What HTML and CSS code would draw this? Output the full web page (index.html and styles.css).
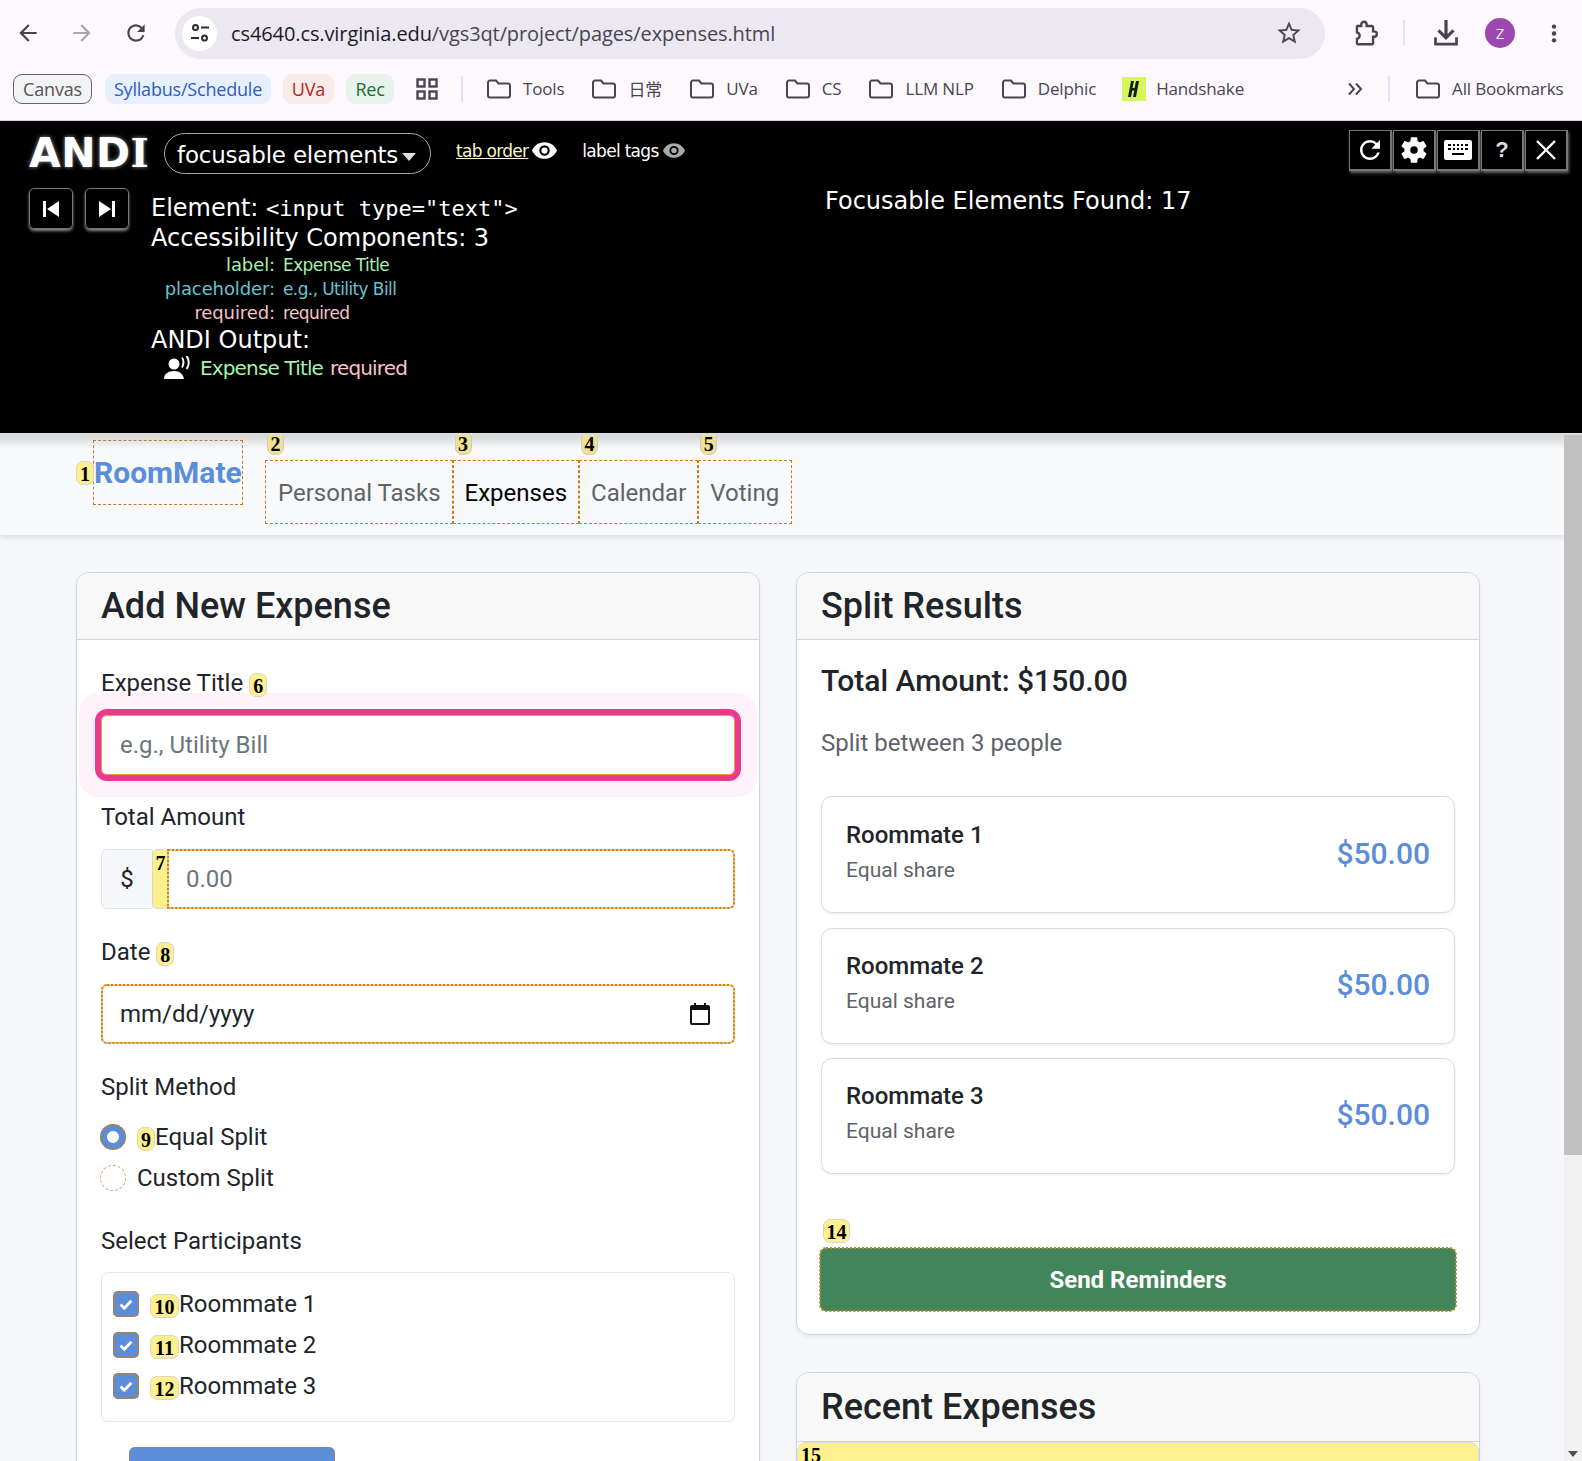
FILE: index.html
```html
<!DOCTYPE html>
<html lang="en">
<head>
<meta charset="UTF-8">
<title>RoomMate - Expenses</title>
<link rel="stylesheet" href="styles.css">
</head>
<body>

<svg class="defs" width="0" height="0" aria-hidden="true">
  <symbol id="folder" viewBox="0 0 26 24">
    <path d="M2 5.500a2 2 0 0 1 2-2h6l2.500 3H22a2 2 0 0 1 2 2v10a2 2 0 0 1-2 2H4a2 2 0 0 1-2-2z" fill="none" stroke="#47464f" stroke-width="2"/>
  </symbol>
  <symbol id="eye" viewBox="0 0 24 16">
    <path d="M12 0C6.500 0 2 3.400 0 8c2 4.600 6.500 8 12 8s10-3.400 12-8c-2-4.600-6.500-8-12-8zm0 13a5 5 0 1 1 0-10 5 5 0 0 1 0 10zm0-8a3 3 0 1 0 0 6 3 3 0 0 0 0-6z"/>
  </symbol>
  <symbol id="tick" viewBox="0 0 24 24">
    <path d="M5.500 12.500l4.500 4.500 8.500-9" fill="none" stroke="#fff" stroke-width="3.400"/>
  </symbol>
</svg>

<div class="toolbar">
  <svg class="tool-icon back" viewBox="0 0 24 24"><path d="M20 11H7.830l5.590-5.590L12 4l-8 8 8 8 1.410-1.410L7.830 13H20v-2z"/></svg>
  <svg class="tool-icon forward" viewBox="0 0 24 24"><path d="M4 11h12.170l-5.590-5.590L12 4l8 8-8 8-1.410-1.410L16.170 13H4v-2z"/></svg>
  <svg class="tool-icon reload" viewBox="0 0 24 24"><path d="M17.650 6.350A7.958 7.958 0 0 0 12 4c-4.420 0-7.990 3.580-7.990 8s3.570 8 7.990 8c3.730 0 6.840-2.550 7.730-6h-2.080A5.990 5.990 0 0 1 12 18c-3.310 0-6-2.690-6-6s2.690-6 6-6c1.660 0 3.140.690 4.220 1.780L13 11h7V4l-2.350 2.350z"/></svg>
  <div class="omnibox">
    <span class="site-chip">
      <svg width="22" height="22" viewBox="0 0 22 22"><g fill="none" stroke="#2c2b33" stroke-width="2"><circle cx="6.500" cy="5.500" r="2.500"/><path d="M12 5.500h8M2 16h8"/><circle cx="15.500" cy="16" r="2.500"/></g></svg>
    </span>
    <span class="url">cs4640.cs.virginia.edu<span class="url-path">/vgs3qt/project/pages/expenses.html</span></span>
    <svg class="star" viewBox="0 0 24 24"><path d="M22 9.240l-7.190-.620L12 2 9.190 8.630 2 9.240l5.460 4.730L5.820 21 12 17.270 18.180 21l-1.630-7.030L22 9.240zM12 15.400l-3.760 2.270 1-4.280-3.320-2.880 4.380-.380L12 6.100l1.710 4.040 4.380.380-3.320 2.880 1 4.280L12 15.400z"/></svg>
  </div>
  <svg class="tool-icon puzzle" viewBox="0 0 26 26"><path d="M6 6.500h3.500V5a2.500 2.500 0 0 1 5 0v1.500H19a1.500 1.500 0 0 1 1.500 1.500v3.500h1a2.500 2.500 0 0 1 0 5h-1V22a1.500 1.500 0 0 1-1.500 1.500H7A1.500 1.500 0 0 1 5.500 22v-3.500c2-.5 2.500-1.500 2.500-3s-.5-2.500-2.500-3V7z" fill="none" stroke="#47464f" stroke-width="2.200"/></svg>
  <span class="tool-sep"></span>
  <svg class="tool-icon download" viewBox="0 0 26 26"><path d="M11.500 1h3v13l4.500-4.500 2 2-8 8-8-8 2-2 4.500 4.500zM2 17h2.500v5h17v-5H24v7.500H2z"/></svg>
  <span class="avatar">Z</span>
  <svg class="tool-icon dots" viewBox="0 0 24 24"><circle cx="12" cy="5" r="2.400"/><circle cx="12" cy="12.500" r="2.400"/><circle cx="12" cy="20" r="2.400"/></svg>
</div>

<div class="bookmarks">
  <span class="chip chip-canvas">Canvas</span>
  <span class="chip chip-syllabus">Syllabus/Schedule</span>
  <span class="chip chip-uva">UVa</span>
  <span class="chip chip-rec">Rec</span>
  <svg class="apps" viewBox="0 0 22 22"><g fill="none" stroke="#47464f" stroke-width="2.400"><rect x="1.500" y="1.500" width="7" height="7"/><rect x="13.500" y="1.500" width="7" height="7"/><rect x="1.500" y="13.500" width="7" height="7"/><rect x="13.500" y="13.500" width="7" height="7"/></g></svg>
  <span class="bm-sep"></span>
  <span class="bm bm-tools"><svg class="folder"><use href="#folder"/></svg>Tools</span>
  <span class="bm bm-daily"><svg class="folder"><use href="#folder"/></svg>日常</span>
  <span class="bm bm-uva"><svg class="folder"><use href="#folder"/></svg>UVa</span>
  <span class="bm bm-cs"><svg class="folder"><use href="#folder"/></svg>CS</span>
  <span class="bm bm-llm"><svg class="folder"><use href="#folder"/></svg>LLM NLP</span>
  <span class="bm bm-delphic"><svg class="folder"><use href="#folder"/></svg>Delphic</span>
  <span class="bm bm-hand"><svg class="hs-logo" viewBox="0 0 24 24"><rect width="24" height="24" fill="#d6f75c"/><path d="M9 4h3l-1.500 7h2L14 4h3l-3 16h-3l1.300-6.500h-2L9 20H6z" fill="#14201a"/></svg>Handshake</span>
  <svg class="more" viewBox="0 0 18 14"><path d="M2 1.500l5 5.500-5 5.500M9 1.500l5 5.500-5 5.500" fill="none" stroke="#47464f" stroke-width="2"/></svg>
  <span class="bm-sep bm-sep-right"></span>
  <span class="bm bm-all"><svg class="folder"><use href="#folder"/></svg>All Bookmarks</span>
</div>

<div class="andi">
  <div class="andi-main">
    <div class="andi-top">
      <span class="andi-logo">AND<span class="logo-i">I</span></span>
      <span class="andi-mode">focusable elements<span class="caret"></span></span>
      <span class="andi-link andi-link-on">tab order</span>
      <svg class="eye eye-on"><use href="#eye"/></svg>
      <span class="andi-link">label tags</span>
      <svg class="eye eye-off"><use href="#eye"/></svg>
    </div>
    <div class="andi-body">
      <div class="andi-nav">
        <span class="nav-btn"><svg width="20" height="20" viewBox="0 0 20 20"><path d="M2 2h3v16H2zM18 2v16L6 10z" fill="#fff"/></svg></span>
        <span class="nav-btn"><svg width="20" height="20" viewBox="0 0 20 20"><path d="M18 2h-3v16h3zM2 2v16l12-8z" fill="#fff"/></svg></span>
      </div>
      <div class="andi-info">
        <div class="info-line">Element: <code>&lt;input type="text"&gt;</code></div>
        <div class="info-line">Accessibility Components: 3</div>
        <div class="comp comp-label"><span class="comp-key">label:</span><span class="comp-val">Expense Title</span></div>
        <div class="comp comp-placeholder"><span class="comp-key">placeholder:</span><span class="comp-val">e.g., Utility Bill</span></div>
        <div class="comp comp-required"><span class="comp-key">required:</span><span class="comp-val">required</span></div>
        <div class="info-line">ANDI Output:</div>
        <div class="output">
          <svg width="28" height="24" viewBox="0 0 28 24"><circle cx="10" cy="8" r="5.500" fill="#fff"/><path d="M0 23c0-5 4-8 10-8s9 3 10 8z" fill="#fff"/><path d="M18 1.500c2 2.500 2 7 0 10M22.500 0c3 3.500 3 9.500 0 13" fill="none" stroke="#fff" stroke-width="2"/></svg>
          <span class="out-label">Expense Title</span><span class="out-required">required</span>
        </div>
      </div>
    </div>
  </div>
  <div class="andi-count">Focusable Elements Found: 17</div>
  <div class="andi-tools">
    <span class="tool-btn"><svg width="30" height="30" viewBox="0 0 24 24"><path fill="#fff" d="M17.650 6.350A7.958 7.958 0 0 0 12 4c-4.420 0-7.990 3.580-7.990 8s3.570 8 7.990 8c3.730 0 6.840-2.550 7.730-6h-2.080A5.990 5.990 0 0 1 12 18c-3.310 0-6-2.690-6-6s2.690-6 6-6c1.660 0 3.140.690 4.220 1.780L13 11h7V4l-2.350 2.350z"/></svg></span>
    <span class="tool-btn"><svg width="32" height="32" viewBox="0 0 24 24"><path fill="#fff" d="M19.140 12.940c.04-.3.060-.61.060-.94 0-.32-.02-.64-.07-.94l2.030-1.580a.49.49 0 0 0 .12-.61l-1.920-3.320a.488.488 0 0 0-.59-.22l-2.390.96c-.5-.38-1.030-.7-1.620-.94l-.36-2.540a.484.484 0 0 0-.48-.41h-3.840c-.24 0-.43.17-.47.41l-.36 2.540c-.59.24-1.130.57-1.620.94l-2.390-.96c-.22-.08-.47 0-.59.22L2.740 8.870c-.12.21-.08.47.12.61l2.030 1.580c-.05.3-.09.63-.09.94s.02.64.07.94l-2.030 1.580a.49.49 0 0 0-.12.61l1.920 3.320c.12.22.37.29.59.22l2.390-.96c.5.38 1.030.7 1.620.94l.36 2.54c.05.24.24.41.48.41h3.840c.24 0 .44-.17.47-.41l.36-2.54c.59-.24 1.130-.56 1.620-.94l2.390.96c.22.08.47 0 .59-.22l1.920-3.320c.12-.22.07-.47-.12-.61l-2.010-1.580zM12 14.800a2.800 2.800 0 1 1 0-5.600 2.800 2.800 0 0 1 0 5.600z"/></svg></span>
    <span class="tool-btn tool-keys"><svg width="28" height="20" viewBox="0 0 28 20"><path fill="#fff" fill-rule="evenodd" d="M2 0h24a2 2 0 0 1 2 2v16a2 2 0 0 1-2 2H2a2 2 0 0 1-2-2V2a2 2 0 0 1 2-2zm2 4v2h3V4zm5 0v2h2V4zm4 0v2h2V4zm4 0v2h2V4zm4 0v2h3V4zM4 8v2h3V8zm5 0v2h2V8zm4 0v2h2V8zm4 0v2h2V8zm4 0v2h3V8zM8 13v2h12v-2z"/></svg></span>
    <span class="tool-btn tool-help">?</span>
    <span class="tool-btn"><svg width="22" height="22" viewBox="0 0 22 22"><path d="M2 2l18 18M20 2L2 20" stroke="#fff" stroke-width="2.400"/></svg></span>
  </div>
</div>

<div class="viewport">
  <div class="page">
    <nav class="site-nav">
      <span class="brand-wrap"><span class="tag tag-brand">1</span><a class="brand focusable">RoomMate</a></span>
      <div class="nav-links">
        <a class="nav-link focusable"><span class="tag tag-top">2</span>Personal Tasks</a>
        <a class="nav-link nav-active focusable"><span class="tag tag-top">3</span>Expenses</a>
        <a class="nav-link focusable"><span class="tag tag-top">4</span>Calendar</a>
        <a class="nav-link focusable"><span class="tag tag-top">5</span>Voting</a>
      </div>
    </nav>

    <main class="columns">
      <section class="card">
        <h2 class="card-title">Add New Expense</h2>
        <div class="card-body">
          <div class="field-label">Expense Title <span class="tag">6</span></div>
          <div class="input input-focus">e.g., Utility Bill</div>

          <div class="field-label">Total Amount</div>
          <div class="input-group">
            <span class="addon">$</span>
            <span class="tag tag-seven">7</span>
            <div class="input input-dotted group-input">0.00</div>
          </div>

          <div class="field-label">Date <span class="tag">8</span></div>
          <div class="input input-dotted date-input">
            <span>mm/dd/yyyy</span>
            <svg width="20" height="22" viewBox="0 0 20 22"><path fill-rule="evenodd" d="M4 0h2v2h8V0h2v2h2a2 2 0 0 1 2 2v16a2 2 0 0 1-2 2H2a2 2 0 0 1-2-2V4a2 2 0 0 1 2-2h2zM2 7v13h16V7z" fill="#111"/></svg>
          </div>

          <div class="field-label">Split Method</div>
          <div class="choices">
            <div class="choice"><span class="radio radio-on"></span><span class="tag">9</span>Equal Split</div>
            <div class="choice"><span class="radio"></span>Custom Split</div>
          </div>

          <div class="field-label">Select Participants</div>
          <div class="participants">
            <div class="choice"><span class="check"><svg width="20" height="20"><use href="#tick"/></svg></span><span class="tag">10</span>Roommate 1</div>
            <div class="choice"><span class="check"><svg width="20" height="20"><use href="#tick"/></svg></span><span class="tag">11</span>Roommate 2</div>
            <div class="choice"><span class="check"><svg width="20" height="20"><use href="#tick"/></svg></span><span class="tag">12</span>Roommate 3</div>
          </div>

          <div class="btn-add"></div>
        </div>
      </section>

      <div class="right-col">
        <section class="card">
          <h2 class="card-title">Split Results</h2>
          <div class="card-body result-body">
            <div class="total">Total Amount: $150.00</div>
            <div class="split-note">Split between 3 people</div>
            <div class="share-list">
              <div class="share">
                <div class="share-text"><div class="share-name">Roommate 1</div><div class="share-note">Equal share</div></div>
                <div class="share-amount">$50.00</div>
              </div>
              <div class="share">
                <div class="share-text"><div class="share-name">Roommate 2</div><div class="share-note">Equal share</div></div>
                <div class="share-amount">$50.00</div>
              </div>
              <div class="share">
                <div class="share-text"><div class="share-name">Roommate 3</div><div class="share-note">Equal share</div></div>
                <div class="share-amount">$50.00</div>
              </div>
            </div>
            <span class="tag tag-fourteen">14</span>
            <button class="btn-send">Send Reminders</button>
          </div>
        </section>

        <section class="card card-recent">
          <h2 class="card-title">Recent Expenses</h2>
          <div class="recent-tag">15</div>
        </section>
      </div>
    </main>
  </div>

  <div class="scrollbar">
    <div class="scroll-thumb"></div>
    <div class="scroll-arrow"></div>
  </div>
</div>

</body>
</html>
```

FILE: styles.css
```css
html, body {margin: 0; padding: 0; height: 1461px; overflow: hidden;}
body {display: flex; flex-direction: column; background: #fcf8fe; font-family: 'Open Sans', sans-serif; color: #212529;}
.defs {position: absolute;}

/* browser chrome */
.toolbar {height: 62px; display: flex; align-items: center; box-sizing: border-box; padding: 4px 0 0 0; background: #fcf8fe;}
.tool-icon {fill: #47464f; flex: none;}
.back {width: 26px; height: 26px; margin-left: 15px;}
.forward {width: 26px; height: 26px; margin-left: 28px; fill: #a9a7ae;}
.reload {width: 26px; height: 26px; margin-left: 28px;}
.omnibox {width: 1150px; height: 51px; margin-left: 26px; border-radius: 26px; background: #ece8f1;
  display: flex; align-items: center; box-sizing: border-box; padding: 0 22px 0 7px;}
.site-chip {width: 35px; height: 35px; border-radius: 50%; background: #fff; display: flex; align-items: center; justify-content: center;}
.url {margin-left: 14px; font-size: 20px; color: #1d1b20; letter-spacing: -0.1px; flex: 1;}
.url-path {color: #47464f;}
.star {width: 28px; height: 28px; fill: #47464f;}
.puzzle {width: 28px; height: 28px; margin-left: 26px;}
.tool-sep {width: 2px; height: 26px; background: #e6e0f5; margin-left: 24px;}
.download {width: 28px; height: 28px; margin-left: 27px;}
.avatar {width: 30px; height: 30px; border-radius: 50%; background: #9c47b0; color: #f3e5f5; font-size: 15px;
  display: flex; align-items: center; justify-content: center; margin-left: 25px;}
.dots {width: 22px; height: 26px; margin-left: 28px;}

.bookmarks {height: 59px; box-sizing: border-box; padding: 0 0 5px 13px; display: flex; align-items: center; border-bottom: 1px solid #d7d5da;
  font-size: 17px; color: #47464f; white-space: nowrap;}
.chip {height: 30px; box-sizing: border-box; border-radius: 9px; display: flex; align-items: center; justify-content: center; flex: none; font-size: 18px; letter-spacing: -0.2px;}
.chip-canvas {width: 79px; background: #f1f3f4; border: 1px solid #5f6368; color: #555;}
.chip-syllabus {width: 166px; margin-left: 13px; background: #e8f0fe; color: #2c5cc5;}
.chip-uva {width: 51px; margin-left: 12px; background: #f9ebe7; color: #b3261e;}
.chip-rec {width: 48px; margin-left: 12px; background: #e8f3ec; color: #1e6b34;}
.apps {width: 22px; height: 22px; margin-left: 22px; flex: none;}
.bm-sep {width: 2px; height: 26px; background: #e6e0f5; margin-left: 23px; flex: none;}
.bm {display: flex; align-items: center; flex: none; letter-spacing: -0.15px; font-family: 'Open Sans', 'Noto Sans CJK SC', sans-serif;}
.folder {width: 26px; height: 24px; margin-right: 11px; flex: none;}
.bm-tools {margin-left: 23px;}
.bm-daily {margin-left: 27px;}
.bm-uva {margin-left: 27px;}
.bm-cs {margin-left: 27px;}
.bm-llm {margin-left: 27px;}
.bm-delphic {margin-left: 27px;}
.bm-hand {margin-left: 26px;}
.hs-logo {width: 24px; height: 24px; margin-right: 10px;}
.more {width: 18px; height: 14px; margin-left: 103px; flex: none;}
.bm-sep-right {margin-left: 23px;}
.bm-all {margin-left: 25px;}

/* ANDI panel */
.andi {height: 314px; flex: none; background: #000; color: #fff; position: relative; display: flex; box-sizing: border-box;
  padding: 11px 14px 0 29px; border-bottom: 2px solid #ddd; font-family: 'DejaVu Sans', sans-serif; z-index: 2;}
.andi-main {width: 796px; flex: none;}
.andi-top {display: flex; align-items: center; height: 42px;}
.andi-logo {font-size: 41px; font-weight: bold; letter-spacing: 0.5px; text-shadow: 0 0 4px #999; width: 135px; flex: none; line-height: 42px; white-space: nowrap;}
.logo-i {font-family: 'DejaVu Serif', serif; font-size: 39px;}
.andi-mode {width: 267px; height: 41px; box-sizing: border-box; border: 1px solid #aaa; border-radius: 21px; display: flex; align-items: center;
  padding: 3px 0 0 12px; font-size: 23px; letter-spacing: -0.2px; flex: none; white-space: nowrap;}
.caret {width: 0; height: 0; border-left: 7px solid transparent; border-right: 7px solid transparent; border-top: 8px solid #ddd; margin: 4px 0 0 4px;}
.andi-link {font-size: 17px; margin-left: 25px; letter-spacing: -0.7px; position: relative; top: -2px;}
.andi-link-on {color: #fff6cc; text-decoration: underline;}
.eye {width: 25px; height: 17px; margin-left: 4px; position: relative; top: -3px; flex: none;}
.eye-on {fill: #fff;}
.eye-off {fill: #aaa; width: 22px; height: 15px;}
.andi-body {display: flex; margin-top: 14px;}
.andi-nav {display: flex; gap: 12px; width: 122px; flex: none;}
.nav-btn {width: 44px; height: 41px; box-sizing: border-box; border: 1px solid #777; border-radius: 5px; display: flex; align-items: center; justify-content: center;
  box-shadow: 0 2px 3px #888;}
.andi-info {font-size: 24px; padding-top: 5px;}
.info-line {height: 30px; line-height: 30px; white-space: nowrap;}
.info-line code {font-family: 'DejaVu Sans Mono', monospace; font-size: 22px;}
.comp {display: flex; height: 24px; line-height: 24px; font-size: 18px; white-space: nowrap;}
.comp-key {width: 124px; text-align: right; margin-right: 8px; letter-spacing: -0.1px;}
.comp-val {font-size: 17px; letter-spacing: -0.6px;}
.comp-label {color: #a8f0b0;}
.comp-placeholder {color: #66c4d4;}
.comp-required {color: #f6c4c8;}
.output {display: flex; align-items: center; gap: 7px; margin: -1px 0 0 13px; font-size: 20px; height: 28px; letter-spacing: -0.85px; white-space: nowrap;}
.output svg {margin-right: 1px;}
.out-label {color: #a8f0b0;}
.out-required {color: #f6c4c8;}
.andi-count {font-size: 24px; margin-top: 55px; white-space: nowrap; flex: 1;}
.andi-tools {display: flex; gap: 1px; height: 42px; position: absolute; top: 9px; right: 14px;}
.tool-btn {width: 43px; height: 41px; box-sizing: border-box; border: 1px solid #777; border-right-width: 2px; border-bottom-width: 2px; display: flex; align-items: center; justify-content: center;
  box-shadow: 1px 2px 3px #666; background: #000;}
.tool-help {font-size: 22px; font-family: 'Liberation Sans', sans-serif; font-weight: bold; color: #ddd;}

/* page */
.viewport {flex: 1; min-height: 0; display: flex; background: #f5f7fb; overflow: hidden;}
.page {flex: 1; min-width: 0; font-family: Roboto, sans-serif;}
.site-nav {height: 100px; box-sizing: border-box; background: #f8f9fa; display: flex; padding-left: 93px;
  box-shadow: 0 2px 6px rgba(0,0,0,.12); position: relative;}
.site-nav::before {content: ""; position: absolute; left: 0; right: 0; top: 0; height: 14px; background: linear-gradient(rgba(0,0,0,.14), transparent);}
.focusable {outline: 1px dashed #cc7a1c; outline-offset: -1px;}
.brand-wrap {position: relative; margin-top: 5px; height: 65px;}
.brand {display: block; box-sizing: border-box; width: 150px; height: 65px; padding: 16px 0 0 1px; font-size: 30px; line-height: 34px; font-weight: 700; color: #5b8dd9; white-space: nowrap;}
.nav-links {display: flex; margin: 25px 0 0 22px; height: 64px;}
.nav-link {position: relative; box-sizing: border-box; height: 64px; line-height: 66px; padding: 0 12px; font-size: 24px; color: #5f6368; white-space: nowrap;}
.nav-link:first-child {padding-left: 13px;}
.nav-link:last-child {padding-right: 13px;}
.nav-active {color: #000;}
.tag {display: inline-block; box-sizing: border-box; min-width: 18px; height: 24px; padding: 0 2px; background: #fdf08e; border: 1px solid #d8d8c0; border-radius: 7px;
  font: bold 20px/25px 'Liberation Serif', serif; color: #000; text-align: center; vertical-align: -2px;}
.tag-brand {position: absolute; left: -17px; top: 21px; min-width: 18px; padding: 0;}
.tag-top {position: absolute; left: 2px; top: -29px; background: #eee192; min-width: 17px; padding: 0; border-color: #ccc;}

.columns {display: grid; grid-template-columns: 684px 684px; gap: 36px; padding: 37px 0 0 76px;}
.card {background: #fff; border: 1px solid #d0d3d8; border-radius: 13px; box-shadow: 0 2px 4px rgba(0,0,0,.06);}
.card-title {margin: 0; height: 67px; box-sizing: border-box; border-bottom: 1px solid #d0d3d8; background: #f8f8f9; border-radius: 12px 12px 0 0;
  padding-left: 24px; font-size: 36px; line-height: 66px; font-weight: 500; color: #212529;}
.card-body {padding: 25px 24px 24px 24px;}

.field-label {height: 36px; line-height: 37px; font-size: 24px; margin-bottom: 14px; white-space: nowrap;}
.input {height: 60px; box-sizing: border-box; border: 1px solid #e3a13e; border-radius: 6px; background: #fff; padding: 0 18px; line-height: 58px; font-size: 24px; color: #6c757d;}
.input-dotted {border: 2px solid #efc384; outline: 2px dotted #d08418; outline-offset: -2px; line-height: 56px; padding: 0 17px;}
.input-focus {outline: 6px solid #ec398d; box-shadow: 0 0 0 22px #fff2f8; margin-bottom: 24px; position: relative;}
.field-label:first-child {position: relative; z-index: 1;}
.input-group {display: flex; height: 60px; margin-bottom: 25px; position: relative;}
.addon {width: 52px; box-sizing: border-box; background: #f5f7fb; border: 1px solid #e2e6ea; border-radius: 6px 0 0 6px; text-align: center; line-height: 58px; font-size: 24px;}
.tag-seven {position: absolute; left: 51px; top: 0; height: 60px; width: 17px; min-width: 17px; padding: 0; border-radius: 6px; line-height: 26px;}
.group-input {flex: 1; margin-left: 14px; border-radius: 0 6px 6px 0; position: relative;}
.date-input {display: flex; justify-content: space-between; align-items: center; color: #212529; margin-bottom: 25px; padding-right: 23px;}
.choices {margin: -3px 0 25px -1px;}
.choice {height: 41px; display: flex; align-items: center; font-size: 24px; white-space: nowrap;}
.radio {width: 26px; height: 26px; box-sizing: border-box; border-radius: 50%; border: 1px dashed #d9a066; margin-right: 11px; flex: none;}
.radio-on {border: 7px solid #5b8dd9; background: #fff; outline: 2px dotted #cc7a1c; outline-offset: -2px;}
.choice .tag {position: relative; top: 2px;}
.participants {height: 150px; box-sizing: border-box; border: 1px solid #e3e7ec; border-radius: 7px; padding: 10px 0 0 11px; margin-top: -1px;}
.participants .tag {width: 29px;}
.check {width: 26px; height: 26px; box-sizing: border-box; border-radius: 5px; background: #5b8dd9; outline: 2px dotted #cc7a1c; outline-offset: -2px; margin-right: 11px;
  display: flex; align-items: center; justify-content: center; flex: none;}
.btn-add {width: 206px; height: 62px; margin: 25px 0 0 28px; border-radius: 6px; background: #5b8dd9; outline: 1px dotted #cc7a1c; outline-offset: -1px;}

.result-body {padding-top: 23px; padding-bottom: 23px;}
.total {font-size: 30px; line-height: 36px; font-weight: 500;}
.split-note {font-size: 24px; line-height: 36px; color: #5f6368; margin-top: 26px;}
.share-list {margin-top: 35px;}
.share {height: 116px; box-sizing: border-box; border: 1px solid #d8dbe0; border-radius: 11px; display: flex; justify-content: space-between; align-items: center;
  padding: 0 24px; box-shadow: 0 1px 3px rgba(0,0,0,.08);}
.share:first-child {height: 117px;}
.share:nth-child(2) {margin: 15px 0 14px 0;}
.share-text {padding-bottom: 7px;}
.share-name {font-size: 24px; line-height: 36px; font-weight: 500;}
.share-note {font-size: 21px; line-height: 32px; color: #5f6368; margin-top: 1px;}
.share-amount {font-size: 30px; font-weight: 500; color: #5b8dd9; padding-bottom: 3px;}
.tag-fourteen {display: block; width: 27px; margin: 45px 0 5px 2px; padding: 0;}
.btn-send {display: block; width: 636px; height: 63px; margin-left: -1px; border: 0; border-radius: 6px; background: #42855a; color: #fff; font: 700 24px Roboto, sans-serif; outline: 2px dotted #b98a2a; outline-offset: -1px;}
.card-recent {margin-top: 37px; height: 200px;}
.card-recent .card-title {height: 69px; line-height: 68px;}
.recent-tag {height: 100px; background: #fdf08e; border: 1px solid #ddd; border-radius: 9px 9px 0 0; font: bold 20px/25px 'Liberation Serif', serif; color: #000; padding-left: 3px;}

.scrollbar {width: 18px; flex: none; background: #f1f1f1; position: relative;}
.scroll-thumb {height: 720px; background: #c1c1c1;}
.scroll-arrow {position: absolute; left: 4px; bottom: 4px; width: 0; height: 0; border-left: 5px solid transparent; border-right: 5px solid transparent; border-top: 6px solid #505050;}
```
